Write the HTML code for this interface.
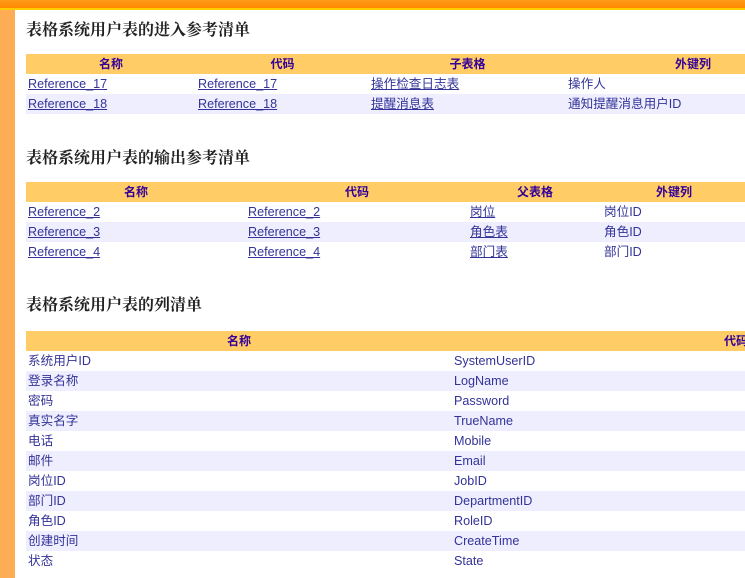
<!DOCTYPE html>
<html><head><meta charset="utf-8"><style>
body{margin:0;width:745px;height:578px;overflow:hidden;background:#fff;font-family:"Liberation Sans","Noto Sans CJK SC",sans-serif;position:relative}
.top{position:absolute;left:0;top:0;width:745px;height:8px;background:linear-gradient(#ff9a1a,#ff8800)}
.yl{position:absolute;left:0;top:8px;width:745px;height:2px;background:#ffcc00}
.left{position:absolute;left:0;top:10px;width:15px;height:568px;background:#ffad55}
h2{position:absolute;left:26px;margin:0;font-size:16px;font-weight:bold;color:#222;font-family:"Liberation Serif","Noto Serif CJK SC","Noto Sans CJK SC",serif}
table{position:absolute;left:26px;border-collapse:collapse;font-size:12.6px;table-layout:fixed}
td,th{height:20px;line-height:20px;padding:0 2px;white-space:nowrap;overflow:hidden;vertical-align:middle}
td *{vertical-align:top}
th{background:#ffcc66;color:#330099;font-weight:bold;text-align:center;font-size:12px}
td{color:#333399}
tr.a td{background:#fff}
tr.b td{background:#eeeeff}
a{color:#333399;text-decoration:underline}
</style></head><body>
<div class="top"></div><div class="yl"></div><div class="left"></div>
<h2 style="top:17px">表格系统用户表的进入参考清单</h2>
<table style="top:54px;width:794px">
<colgroup><col style="width:170px"><col style="width:173px"><col style="width:197px"><col style="width:254px"></colgroup>
<tr><th>名称</th><th>代码</th><th>子表格</th><th>外键列</th></tr>
<tr class="a"><td><a>Reference_17</a></td><td><a>Reference_17</a></td><td><a>操作检查日志表</a></td><td>操作人</td></tr>
<tr class="b"><td><a>Reference_18</a></td><td><a>Reference_18</a></td><td><a>提醒消息表</a></td><td>通知提醒消息用户ID</td></tr>
</table>
<h2 style="top:145px">表格系统用户表的输出参考清单</h2>
<table style="top:182px;width:720px">
<colgroup><col style="width:220px"><col style="width:222px"><col style="width:134px"><col style="width:144px"></colgroup>
<tr><th>名称</th><th>代码</th><th>父表格</th><th>外键列</th></tr>
<tr class="a"><td><a>Reference_2</a></td><td><a>Reference_2</a></td><td><a>岗位</a></td><td>岗位ID</td></tr>
<tr class="b"><td><a>Reference_3</a></td><td><a>Reference_3</a></td><td><a>角色表</a></td><td>角色ID</td></tr>
<tr class="a"><td><a>Reference_4</a></td><td><a>Reference_4</a></td><td><a>部门表</a></td><td>部门ID</td></tr>
</table>
<h2 style="top:292px">表格系统用户表的列清单</h2>
<table style="top:331px;width:994px">
<colgroup><col style="width:426px"><col style="width:568px"></colgroup>
<tr><th>名称</th><th>代码</th></tr>
<tr class="a"><td>系统用户ID</td><td>SystemUserID</td></tr>
<tr class="b"><td>登录名称</td><td>LogName</td></tr>
<tr class="a"><td>密码</td><td>Password</td></tr>
<tr class="b"><td>真实名字</td><td>TrueName</td></tr>
<tr class="a"><td>电话</td><td>Mobile</td></tr>
<tr class="b"><td>邮件</td><td>Email</td></tr>
<tr class="a"><td>岗位ID</td><td>JobID</td></tr>
<tr class="b"><td>部门ID</td><td>DepartmentID</td></tr>
<tr class="a"><td>角色ID</td><td>RoleID</td></tr>
<tr class="b"><td>创建时间</td><td>CreateTime</td></tr>
<tr class="a"><td>状态</td><td>State</td></tr>
</table>
</body></html>
